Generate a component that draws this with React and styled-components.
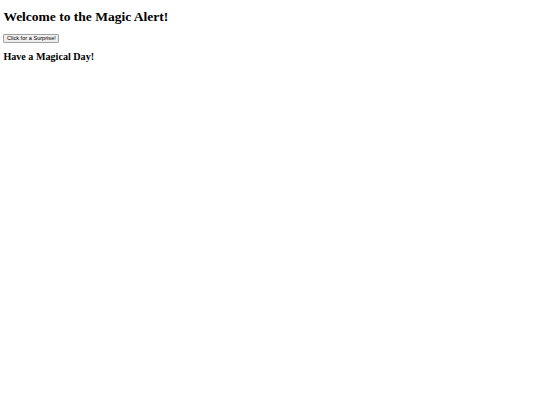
import React from "react";
import styled, { createGlobalStyle } from "styled-components";

const Global = createGlobalStyle`
  html, body { background: #fff; }
  body {
    margin: 3.375px;
    font-family: "Liberation Serif", "Times New Roman", serif;
    font-size: 6.75px;
    color: #000;
  }
`;

const Title = styled.h1`
  font-size: 13.5px;
  font-weight: bold;
  margin: 6px 0 8.2px;
`;

const SurpriseButton = styled.button`
  font-family: "Liberation Sans", Arial, sans-serif;
  font-size: 5.625px;
  padding: 0.8px 2.53px;
  border: 1px solid #a0a0a0;
  border-radius: 1px;
  background: #efefef;
  color: #000;
`;

const Message = styled.h2`
  font-size: 10.125px;
  font-weight: bold;
  margin: 8.1px 0;
`;

export default function App() {
  return (
    <>
      <Global />
      <Title>Welcome to the Magic Alert!</Title>
      <SurpriseButton>Click for a Surprise!</SurpriseButton>
      <Message>Have a Magical Day!</Message>
    </>
  );
}
